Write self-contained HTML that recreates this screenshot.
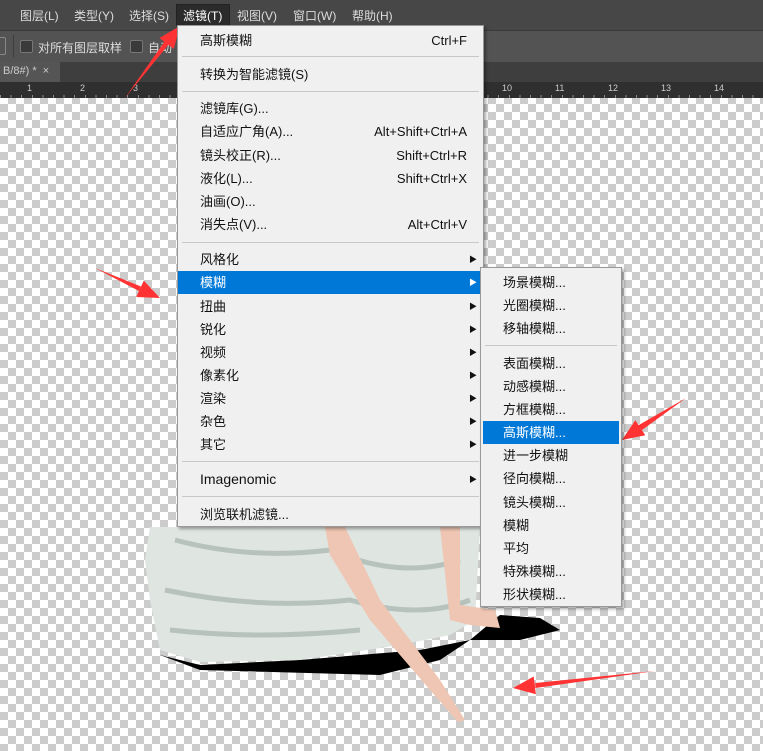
<!DOCTYPE html>
<html><head><meta charset="utf-8"><style>
*{margin:0;padding:0;box-sizing:border-box}
body{width:763px;height:751px;overflow:hidden;position:relative;font-family:"Liberation Sans","Noto Sans CJK SC",sans-serif;background-color:#fff;
background-image:linear-gradient(45deg,#ccc 25%,transparent 25%,transparent 75%,#ccc 75%),linear-gradient(45deg,#ccc 25%,transparent 25%,transparent 75%,#ccc 75%);background-size:16px 16px;background-position:0 0,8px 8px}
.abs{position:absolute}
.menubar{left:0;top:0;width:763px;height:30px;background:#474747;color:#ddd;font-size:12px}
.menubar span{position:absolute;top:7px}
.opt{left:0;top:30px;width:763px;height:32px;background:#535353;border-top:1px solid #3a3a3a;color:#ddd;font-size:12px}
.tab{left:0;top:62px;width:763px;height:20px;background:#3e3e3e}
.ruler{left:0;top:82px;width:763px;height:16px;background:#2f2f2f;color:#ccc;font-size:9px}
.menu{background:#f0f0f0;border:1px solid #999;box-shadow:2px 2px 3px rgba(0,0,0,.35);font-size:13px;color:#111}
.it{position:absolute;left:0;right:0;height:23px;line-height:23px}
.it .t{position:absolute;left:22px}
.it .k{position:absolute;right:16px}
.it .a{position:absolute;right:6px;top:0;font-size:8px}
.hl{background:#0078d7;color:#fff}
.sep{position:absolute;left:4px;right:4px;height:1px;background:#c8c8c8}
</style></head><body>
<div class="abs menubar">
<span style="left:20px">图层(L)</span><span style="left:74px">类型(Y)</span><span style="left:129px">选择(S)</span>
<div class="abs" style="left:176px;top:4px;width:54px;height:22px;background:#2b2b2b;border:1px solid #222"></div>
<span style="left:183px;color:#fff">滤镜(T)</span><span style="left:237px">视图(V)</span><span style="left:293px">窗口(W)</span><span style="left:352px">帮助(H)</span>
</div>
<div class="abs opt">
<div class="abs" style="left:-4px;top:6px;width:10px;height:18px;border:1px solid #888;border-radius:2px"></div>
<div class="abs" style="left:13px;top:4px;width:1px;height:22px;background:#3d3d3d"></div>
<div class="abs" style="left:20px;top:9px;width:13px;height:13px;background:#3a3a3a;border:1px solid #777;border-radius:2px"></div>
<span class="abs" style="left:38px;top:8px">对所有图层取样</span>
<div class="abs" style="left:130px;top:9px;width:13px;height:13px;background:#3a3a3a;border:1px solid #777;border-radius:2px"></div>
<span class="abs" style="left:148px;top:8px">自动</span>
</div>
<div class="abs tab"><div class="abs" style="left:0;top:0;width:60px;height:20px;background:#555;color:#ccc;font-size:11px;padding:3px 0 0 3px">B/8#) * &nbsp;×</div></div>
<div class="abs ruler">
<span class="abs" style="left:27px;top:1px">1</span><span class="abs" style="left:80px;top:1px">2</span><span class="abs" style="left:133px;top:1px">3</span>
<span class="abs" style="left:502px;top:1px">10</span><span class="abs" style="left:555px;top:1px">11</span><span class="abs" style="left:608px;top:1px">12</span><span class="abs" style="left:661px;top:1px">13</span><span class="abs" style="left:714px;top:1px">14</span>
<div class="abs" style="left:0;bottom:0;width:763px;height:3px;background:repeating-linear-gradient(90deg,#888 0 1px,transparent 1px 10.6px)"></div>
</div>
<svg class="abs" style="left:0;top:0" width="763" height="751">
<path d="M160 655 L200 670 L380 675 L440 660 L470 640 L520 640 L560 630 L540 618 L500 615 L470 640 L420 650 L300 660 L200 665Z" fill="#000"/>
<path d="M150 527 L480 527 L475 620 L450 635 L400 645 L300 660 L200 662 L160 650 L150 600 L145 560Z" fill="#dfe5e0"/>
<path d="M175 540 Q250 560 330 550 Q400 580 460 560 M165 590 Q260 610 350 600 Q420 620 470 600 M170 630 Q260 640 360 630" stroke="#b8c2bc" stroke-width="5" fill="none"/>
<path d="M325 527 L345 527 L380 600 L440 680 L465 720 L458 722 L430 690 L370 620 L330 555Z" fill="#efc6b3"/>
<path d="M440 527 L460 527 L460 605 L495 610 L500 628 L470 625 L450 620Z" fill="#efc6b3"/>
<g fill="#f33">
<polygon points="95,268 141,286.5 139,291"/><polygon points="160,298 136.2,297 143.8,280.6"/>
<polygon points="125,98 164.6,41.5 168.6,44.5"/><polygon points="180,26 173.8,49 159.4,38"/>
<polygon points="686,398 638,425.5 642,430"/><polygon points="622,440 645.3,435.3 635.3,420.3"/>
<polygon points="655,671 535.2,683 535.5,688"/><polygon points="513,688 535.9,694.3 533.7,676.5"/>
</g>
</svg>
<div class="abs menu" style="left:177px;top:25px;width:307px;height:502px">
<div class="it" style="top:3px"><span class="t">高斯模糊</span><span class="k">Ctrl+F</span></div>
<div class="sep" style="top:30px"></div>
<div class="it" style="top:37px"><span class="t">转换为智能滤镜(S)</span></div>
<div class="sep" style="top:65px"></div>
<div class="it" style="top:71px"><span class="t">滤镜库(G)...</span></div>
<div class="it" style="top:94px"><span class="t">自适应广角(A)...</span><span class="k">Alt+Shift+Ctrl+A</span></div>
<div class="it" style="top:118px"><span class="t">镜头校正(R)...</span><span class="k">Shift+Ctrl+R</span></div>
<div class="it" style="top:141px"><span class="t">液化(L)...</span><span class="k">Shift+Ctrl+X</span></div>
<div class="it" style="top:164px"><span class="t">油画(O)...</span></div>
<div class="it" style="top:187px"><span class="t">消失点(V)...</span><span class="k">Alt+Ctrl+V</span></div>
<div class="sep" style="top:216px"></div>
<div class="it" style="top:222px"><span class="t">风格化</span><span class="a">▶</span></div>
<div class="it hl" style="top:245px"><span class="t">模糊</span><span class="a">▶</span></div>
<div class="it" style="top:269px"><span class="t">扭曲</span><span class="a">▶</span></div>
<div class="it" style="top:292px"><span class="t">锐化</span><span class="a">▶</span></div>
<div class="it" style="top:315px"><span class="t">视频</span><span class="a">▶</span></div>
<div class="it" style="top:338px"><span class="t">像素化</span><span class="a">▶</span></div>
<div class="it" style="top:361px"><span class="t">渲染</span><span class="a">▶</span></div>
<div class="it" style="top:384px"><span class="t">杂色</span><span class="a">▶</span></div>
<div class="it" style="top:407px"><span class="t">其它</span><span class="a">▶</span></div>
<div class="sep" style="top:435px"></div>
<div class="it" style="top:442px;font-size:14px"><span class="t">Imagenomic</span><span class="a">▶</span></div>
<div class="sep" style="top:470px"></div>
<div class="it" style="top:477px"><span class="t">浏览联机滤镜...</span></div>
</div>
<div class="abs menu" style="left:480px;top:267px;width:142px;height:340px">
<div class="it" style="top:3px"><span class="t">场景模糊...</span></div>
<div class="it" style="top:26px"><span class="t">光圈模糊...</span></div>
<div class="it" style="top:49px"><span class="t">移轴模糊...</span></div>
<div class="sep" style="top:77px"></div>
<div class="it" style="top:84px"><span class="t">表面模糊...</span></div>
<div class="it" style="top:107px"><span class="t">动感模糊...</span></div>
<div class="it" style="top:130px"><span class="t">方框模糊...</span></div>
<div class="it hl" style="top:153px;left:2px;right:2px"><span class="t" style="left:20px">高斯模糊...</span></div>
<div class="it" style="top:176px"><span class="t">进一步模糊</span></div>
<div class="it" style="top:199px"><span class="t">径向模糊...</span></div>
<div class="it" style="top:223px"><span class="t">镜头模糊...</span></div>
<div class="it" style="top:246px"><span class="t">模糊</span></div>
<div class="it" style="top:269px"><span class="t">平均</span></div>
<div class="it" style="top:292px"><span class="t">特殊模糊...</span></div>
<div class="it" style="top:315px"><span class="t">形状模糊...</span></div>
</div>
</body></html>
